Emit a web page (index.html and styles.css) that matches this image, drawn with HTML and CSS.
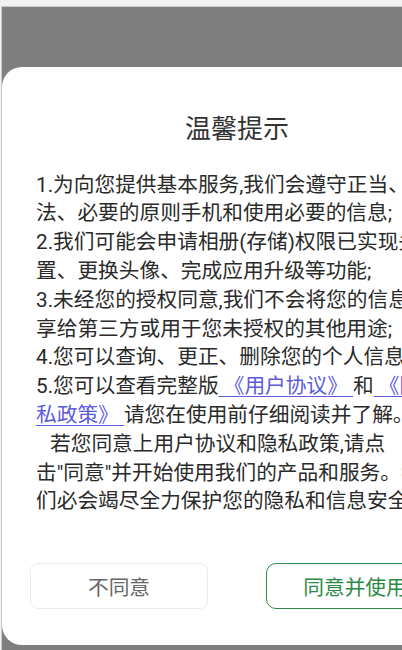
FILE: index.html
```html
<!DOCTYPE html>
<html lang="zh-CN">
<head>
<meta charset="utf-8">
<meta name="viewport" content="width=402">
<title>温馨提示</title>
<link rel="stylesheet" href="styles.css">
</head>
<body>
<div class="screen">
  <div class="dialog">
    <h1 class="title">温馨提示</h1>
    <div class="content">
      <p class="line">1.为向您提供基本服务,我们会遵守正当、合<br>法、必要的原则手机和使用必要的信息;</p>
      <p class="line">2.我们可能会申请相册(存储)权限已实现头像设<br>置、更换头像、完成应用升级等功能;</p>
      <p class="line">3.未经您的授权同意,我们不会将您的信息分<br>享给第三方或用于您未授权的其他用途;</p>
      <p class="line">4.您可以查询、更正、删除您的个人信息;</p>
      <p class="line">5.您可以查看完整版<a class="link" href="#"> 《用户协议》 </a>和<a class="link" href="#"> 《隐<br>私政策》 </a>请您在使用前仔细阅读并了解。</p>
      <p class="line indent">若您同意上用户协议和隐私政策,请点<br>击"同意"并开始使用我们的产品和服务。我<br>们必会竭尽全力保护您的隐私和信息安全!</p>
    </div>
    <div class="actions">
      <button class="btn btn-decline" type="button">不同意</button>
      <button class="btn btn-accept" type="button">同意并使用</button>
    </div>
  </div>
</div>
</body>
</html>
```
FILE: styles.css
```css
html, body {
  margin: 0;
  padding: 0;
  overflow: hidden;
}
body {
  width: 402px;
  height: 650px;
  background: #f1f1f1;
  padding-top: 6px;
  padding-left: 1px;
  box-sizing: border-box;
  font-family: Roboto, "Noto Sans CJK SC", sans-serif;
}
.screen {
  height: 644px;
  background: #7f7f7f;
  border-top: 1px solid #c9c9c9;
  border-left: 1px solid #c9c9c9;
  overflow: hidden;
  box-sizing: border-box;
  padding-top: 60px;
}
.dialog {
  width: 470px;
  height: 578px;
  background: #ffffff;
  border-radius: 20px;
  box-sizing: border-box;
  padding-top: 44px;
  display: flex;
  flex-direction: column;
}
.title {
  margin: 0;
  font-size: 26px;
  line-height: 36px;
  font-weight: normal;
  color: #333333;
  text-align: center;
}
.content {
  margin-top: 23.6px;
  padding: 0 34px;
  font-size: 20.7px;
  line-height: 28.8px;
  color: #2a2a2a;
}
.line {
  margin: 0;
  white-space: nowrap;
}
.indent {
  text-indent: 14px;
}
.link {
  color: #5b5bdc;
  text-decoration: underline;
  text-decoration-thickness: 1px;
  text-underline-offset: 3px;
}
.actions {
  margin-top: 46.8px;
  padding: 0 28px;
  display: flex;
  justify-content: space-between;
}
.btn {
  width: 178px;
  height: 46px;
  background: #ffffff;
  font-family: Roboto, "Noto Sans CJK SC", sans-serif;
  font-size: 20.7px;
  padding: 0;
  box-sizing: border-box;
}
.btn-decline {
  border: 1px solid #ececec;
  border-radius: 8px;
  color: #666666;
}
.btn-accept {
  border: 1.5px solid #2b8a45;
  border-radius: 10px;
  color: #2b8a45;
}
```
